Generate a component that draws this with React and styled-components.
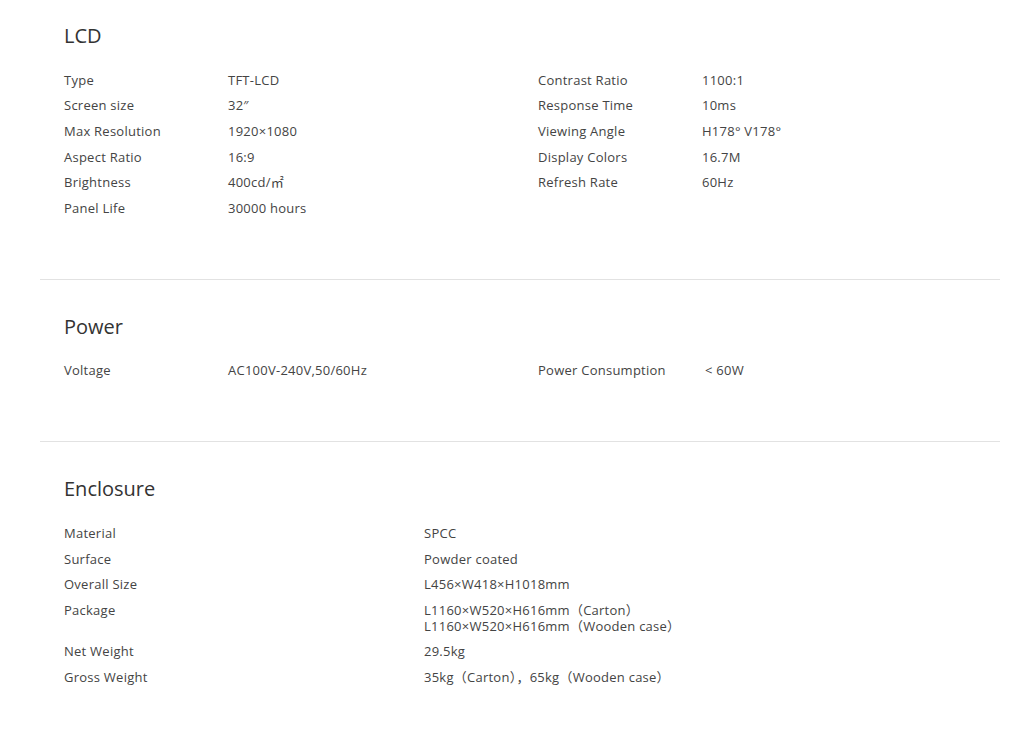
import React from "react";
import styled, { createGlobalStyle } from "styled-components";

const Global = createGlobalStyle`
  html, body { margin: 0; padding: 0; background: #fff; }
  body { font-family: "Open Sans", "Noto Sans CJK SC", sans-serif; color: #333; }
`;

const Page = styled.div`
  width: 960px;
  margin-left: 40px;
`;

const Section = styled.section`
  padding: ${(p) => (p.$first ? "24px" : "35px")} 24px 58px;
  border-top: ${(p) => (p.$first ? "none" : "1px solid #e2e2e2")};
`;

const Heading = styled.h2`
  margin: 0 0 19px;
  font-size: 20px;
  line-height: 24px;
  font-weight: 400;
  color: #333;
`;

const Columns = styled.div`
  display: grid;
  grid-template-columns: 474px 1fr;
`;

const List = styled.div`
  display: flex;
  flex-direction: column;
`;

const Row = styled.div`
  display: grid;
  grid-template-columns: ${(p) => p.$label}px 1fr;
  padding: 4.8px 0;
  font-size: 13px;
  line-height: 16px;
  letter-spacing: 0.25px;
  color: #444;
`;

const Label = styled.div``;

const Value = styled.div`
  white-space: pre-line;
  padding-left: ${(p) => (p.$indent ? "3px" : "0")};
`;

const lcdLeft = [
  ["Type", "TFT-LCD"],
  ["Screen size", "32″"],
  ["Max Resolution", "1920×1080"],
  ["Aspect Ratio", "16:9"],
  ["Brightness", "400cd/㎡"],
  ["Panel Life", "30000 hours"],
];
const lcdRight = [
  ["Contrast Ratio", "1100:1"],
  ["Response Time", "10ms"],
  ["Viewing Angle", "H178° V178°"],
  ["Display Colors", "16.7M"],
  ["Refresh Rate", "60Hz"],
];
const enclosure = [
  ["Material", "SPCC"],
  ["Surface", "Powder coated"],
  ["Overall Size", "L456×W418×H1018mm"],
  ["Package", "L1160×W520×H616mm（Carton）\nL1160×W520×H616mm（Wooden case）"],
  ["Net Weight", "29.5kg"],
  ["Gross Weight", "35kg（Carton），65kg（Wooden case）"],
];

const Rows = ({ items, label = 164, indent }) => (
  <List>
    {items.map(([k, v]) => (
      <Row key={k} $label={label}>
        <Label>{k}</Label>
        <Value $indent={indent}>{v}</Value>
      </Row>
    ))}
  </List>
);

export default function App() {
  return (
    <Page>
      <Global />
      <Section $first>
        <Heading>LCD</Heading>
        <Columns>
          <Rows items={lcdLeft} />
          <Rows items={lcdRight} />
        </Columns>
      </Section>
      <Section>
        <Heading>Power</Heading>
        <Columns>
          <Rows items={[["Voltage", "AC100V-240V,50/60Hz"]]} />
          <Rows items={[["Power Consumption", "< 60W"]]} indent />
        </Columns>
      </Section>
      <Section>
        <Heading>Enclosure</Heading>
        <Rows items={enclosure} label={360} />
      </Section>
    </Page>
  );
}
